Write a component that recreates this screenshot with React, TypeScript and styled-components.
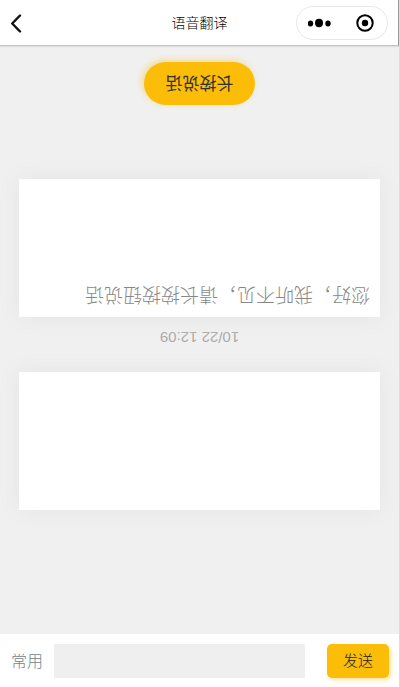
import React, { useState } from "react";
import styled, { createGlobalStyle } from "styled-components";

const GlobalStyle = createGlobalStyle`
  * { box-sizing: border-box; }
  body {
    margin: 0;
    background: #f0f0f0;
    font-family: "Liberation Sans", "Noto Sans CJK SC", sans-serif;
    font-weight: 300;
  }
  button, input { font: inherit; border: 0; padding: 0; }
  button { cursor: pointer; }
`;

const Page = styled.div`
  min-height: 100vh;
  display: flex;
  flex-direction: column;
  background: #f0f0f0;
  border-right: 1px solid #dcdcdc;
`;

const Header = styled.header`
  display: grid;
  grid-template-columns: 1fr auto 1fr;
  align-items: center;
  height: 46px;
  padding: 0 10px 0 11px;
  background: #fff;
  border-right: 1px solid #999;
  border-bottom: 1px solid #c4c4c4;
  box-shadow: 0 1px 1px #dedede;
`;

const BackButton = styled.button`
  width: 12px;
  height: 28px;
  margin-top: 2px;
  background: none;
  svg { display: block; }
`;

const Title = styled.h1`
  margin: 0;
  font-size: 14px;
  line-height: 20px;
  font-weight: 300;
  color: #000;
`;

const Capsule = styled.div`
  justify-self: end;
  display: flex;
  width: 92px;
  height: 34px;
  border: 1px solid #e8e8e8;
  border-radius: 17px;
`;

const CapsuleButton = styled.button`
  flex: 1;
  display: grid;
  place-items: center;
  background: none;
`;

const Main = styled.main`
  flex: 1;
  display: flex;
  flex-direction: column;
  gap: 26px;
  padding: 16px 19px 0;
`;

const FacingPane = styled.section`
  display: flex;
  flex-direction: column;
  align-items: center;
  transform: rotate(180deg);
`;

const Time = styled.time`
  font-size: 15px;
  line-height: 17px;
  color: #aaa;
  margin-bottom: 12px;
`;

const Card = styled.div`
  width: 100%;
  height: 138px;
  padding: 8px 10px;
  background: #fff;
  box-shadow: 0 0 20px #e4e4e4;
  font-size: 19px;
  line-height: 30px;
  color: #888;
`;

const TalkButton = styled.button`
  width: 111px;
  height: 43px;
  margin-top: 74px;
  padding-bottom: 2px;
  border-radius: 22px;
  background: #fbbd08;
  box-shadow: 2px 2px 6px rgba(251, 189, 8, 0.4);
  font-size: 17px;
  font-weight: 400;
  color: #333;
`;

const Footer = styled.form`
  display: flex;
  align-items: center;
  height: 53px;
  padding: 0 10px 0 11px;
  background: #fff;
`;

const Phrases = styled.button`
  margin-right: 11px;
  padding-bottom: 2px;
  background: none;
  font-size: 16px;
  color: #71838d;
`;

const MessageInput = styled.input`
  flex: 1;
  min-width: 0;
  height: 34px;
  padding: 0 8px;
  border-radius: 0;
  background: #efefef;
  font-size: 16px;
`;

const SendButton = styled.button`
  width: 62px;
  height: 34px;
  margin-left: 22px;
  padding-bottom: 2px;
  border-radius: 5px;
  background: #fbbd08;
  box-shadow: 2px 2px 5px rgba(251, 189, 8, 0.4);
  font-size: 15px;
  color: #222;
`;

export default function App() {
  const [message, setMessage] = useState("");
  return (
    <Page lang="zh-CN">
      <GlobalStyle />
      <Header>
        <BackButton aria-label="返回">
          <svg width="12" height="28" viewBox="6 0 12 28" fill="none" stroke="#111" strokeWidth="2.4" strokeLinecap="round" strokeLinejoin="round">
            <path d="M15 5.5 7.2 13.5l7.8 8" />
          </svg>
        </BackButton>
        <Title>语音翻译</Title>
        <Capsule>
          <CapsuleButton aria-label="更多">
            <svg width="24" height="10" viewBox="0 0 24 10" fill="#000">
              <ellipse cx="2.5" cy="5.5" rx="2.7" ry="3" />
              <ellipse cx="11" cy="5" rx="4" ry="4.2" />
              <ellipse cx="20" cy="5.5" rx="2.7" ry="3" />
            </svg>
          </CapsuleButton>
          <CapsuleButton aria-label="关闭">
            <svg width="18" height="18" viewBox="0 0 18 18">
              <circle cx="9" cy="9" r="7.7" fill="none" stroke="#000" strokeWidth="2" />
              <circle cx="9" cy="9" r="3.2" fill="#000" />
            </svg>
          </CapsuleButton>
        </Capsule>
      </Header>
      <Main>
        <FacingPane>
          <Time>10/22 12:09</Time>
          <Card>您好，我听不见，请长按按钮说话</Card>
          <TalkButton>长按说话</TalkButton>
        </FacingPane>
        <Card />
      </Main>
      <Footer onSubmit={(e) => e.preventDefault()}>
        <Phrases type="button">常用</Phrases>
        <MessageInput aria-label="消息" value={message} onChange={(e) => setMessage(e.target.value)} />
        <SendButton type="submit">发送</SendButton>
      </Footer>
    </Page>
  );
}
